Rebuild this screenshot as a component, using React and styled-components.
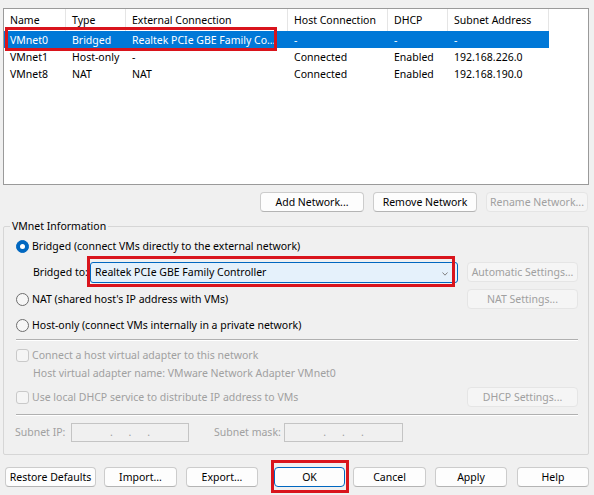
import React from "react";
import styled, { createGlobalStyle } from "styled-components";

const Global = createGlobalStyle`
  html, body { margin: 0; padding: 0; background: #f0f0f0; }
  * { box-sizing: border-box; }
`;

const FONT = `"Noto Sans", "Liberation Sans", sans-serif`;

const Window = styled.div`
  width: 594px;
  height: 495px;
  background: #f0f0f0;
  font-family: ${FONT};
  font-size: 10.5px;
  color: #000;
  display: flex;
  flex-direction: column;
  overflow: hidden;
`;

const ListBox = styled.div`
  position: relative;
  margin: 8px 5px 0 3px;
  height: 177px;
  border: 1px solid #9a9a9a;
  background: #fff;
`;

const cols = "62px 60px 162px 100px 60px 101px";

const HeaderRow = styled.div`
  display: grid;
  grid-template-columns: ${cols};
  height: 22px;
`;

const HeaderCell = styled.div`
  display: flex;
  align-items: center;
  padding-left: 6px;
  border-right: 1px solid #e5e5e5;
  white-space: nowrap;
`;

const Row = styled.div`
  display: grid;
  grid-template-columns: ${cols};
  height: 17px;
  width: 545px;
  background: ${(p) => (p.$selected ? "#0078d7" : "transparent")};
  color: ${(p) => (p.$selected ? "#fff" : "#000")};
`;

const Cell = styled.div`
  display: flex;
  align-items: center;
  padding-left: 6px;
  white-space: nowrap;
  overflow: hidden;
`;

const Highlight = styled.div`
  position: absolute;
  border: 3px solid #d9141c;
  pointer-events: none;
`;

const ButtonRow = styled.div`
  display: flex;
  justify-content: flex-end;
  gap: ${(p) => p.$gap || "9px"};
  margin: ${(p) => p.$margin || "0"};
`;

const Button = styled.div`
  position: relative;
  display: flex;
  align-items: center;
  justify-content: center;
  width: ${(p) => p.$w}px;
  height: 20px;
  margin-left: ${(p) => p.$ml || 0}px;
  border: 1px solid ${(p) => (p.$focus ? "#0067c0" : p.$disabled ? "#e5e5e5" : "#cccccc")};
  border-bottom-color: ${(p) => (p.$focus ? "#0067c0" : p.$disabled ? "#e5e5e5" : "#b4b4b4")};
  border-radius: 4px;
  background: ${(p) => (p.$disabled ? "#f5f5f5" : "#fdfdfd")};
  color: ${(p) => (p.$disabled ? "#a0a0a0" : "#000")};
  white-space: nowrap;
  flex-shrink: 0;
`;

const Group = styled.fieldset`
  margin: 6px 5px 0 3px;
  padding: 0 10px 12px 6px;
  border: 1px solid #d6d6d6;
  border-radius: 2px;
  min-width: 0;
`;

const Legend = styled.legend`
  padding: 0 2px;
  line-height: 16px;
  height: 16px;
`;

const Line = styled.div`
  display: flex;
  align-items: center;
  height: ${(p) => p.$h || 18}px;
  margin-top: ${(p) => p.$mt || 0}px;
  padding-left: ${(p) => p.$pl ?? 6}px;
  color: ${(p) => (p.$disabled ? "#a0a0a0" : "#000")};
  white-space: nowrap;
`;

const Spacer = styled.div`
  flex: 1;
`;

const RadioOuter = styled.span`
  width: 13px;
  height: 13px;
  border-radius: 50%;
  flex-shrink: 0;
  margin-right: 3px;
  display: flex;
  align-items: center;
  justify-content: center;
  background: ${(p) => (p.$on ? "#0067c0" : "#f6f6f6")};
  border: 1px solid ${(p) => (p.$on ? "#0067c0" : "#6e6e6e")};
  &::after {
    content: "";
    display: ${(p) => (p.$on ? "block" : "none")};
    width: 5px;
    height: 5px;
    border-radius: 50%;
    background: #fff;
  }
`;

const CheckBox = styled.span`
  width: 13px;
  height: 13px;
  border-radius: 3px;
  border: 1px solid #c9c9c9;
  background: #f5f5f5;
  flex-shrink: 0;
  margin-right: 3px;
`;

const Separator = styled.div`
  height: 2px;
  margin: ${(p) => p.$mt}px 0 0 6px;
  border-top: 1px solid #b0b0b0;
  border-bottom: 1px solid #fff;
`;

const FieldLabel = styled.span`
  width: ${(p) => p.$w}px;
  flex-shrink: 0;
  padding-left: ${(p) => p.$pl || 0}px;
`;

const Combo = styled.div`
  position: relative;
  flex: 1;
  height: 21px;
  margin-right: 9px;
  border: 1px solid #0067c0;
  border-radius: 3px;
  background: #e5f1fb;
  display: flex;
  align-items: center;
  padding-left: 4px;
`;

const Chevron = styled.svg`
  position: absolute;
  right: 9px;
  top: 9px;
`;

const IpBox = styled.div`
  width: ${(p) => p.$w}px;
  height: 19px;
  border: 1px solid #c4c4c4;
  background: #f0f0f0;
  display: flex;
  align-items: center;
  justify-content: space-evenly;
  padding: 0 22px;
  color: #a0a0a0;
  margin-right: ${(p) => p.$mr || 0}px;
`;

const rows = [
  ["VMnet0", "Bridged", "Realtek PCIe GBE Family Co...", "-", "-", "-"],
  ["VMnet1", "Host-only", "-", "Connected", "Enabled", "192.168.226.0"],
  ["VMnet8", "NAT", "NAT", "Connected", "Enabled", "192.168.190.0"],
];

const headers = ["Name", "Type", "External Connection", "Host Connection", "DHCP", "Subnet Address"];

export default function App() {
  return (
    <Window>
      <Global />
      <ListBox>
        <HeaderRow>
          {headers.map((h) => (
            <HeaderCell key={h}>{h}</HeaderCell>
          ))}
        </HeaderRow>
        {rows.map((r, i) => (
          <Row key={r[0]} $selected={i === 0}>
            {r.map((c, j) => (
              <Cell key={j}>{c}</Cell>
            ))}
          </Row>
        ))}
        <Highlight style={{ left: 1, top: 18, width: 272, height: 24 }} />
      </ListBox>

      <ButtonRow $margin="7px 6px 0 0">
        <Button $w={104}>Add Network...</Button>
        <Button $w={104}>Remove Network</Button>
        <Button $w={102} $disabled>Rename Network...</Button>
      </ButtonRow>

      <Group>
        <Legend>VMnet Information</Legend>
        <Line $mt={3}>
          <RadioOuter $on />
          Bridged (connect VMs directly to the external network)
        </Line>
        <Line $h={26} $mt={4}>
          <FieldLabel $w={74} $pl={17}>Bridged to:</FieldLabel>
          <Combo>
            Realtek PCIe GBE Family Controller
            <Chevron width="6" height="4" viewBox="0 0 6 4">
              <path d="M0.5 0.5 L3 3.2 L5.5 0.5" fill="none" stroke="#808080" strokeWidth="1" />
            </Chevron>
            <Highlight style={{ left: -4, top: -7, width: 368, height: 31 }} />
          </Combo>
          <Button $w={111} $disabled>Automatic Settings...</Button>
        </Line>
        <Line $h={20} $mt={4}>
          <RadioOuter />
          NAT (shared host's IP address with VMs)
          <Spacer />
          <Button $w={111} $disabled>NAT Settings...</Button>
        </Line>
        <Line $mt={7}>
          <RadioOuter />
          Host-only (connect VMs internally in a private network)
        </Line>
        <Separator $mt={5} />
        <Line $mt={5} $disabled>
          <CheckBox />
          Connect a host virtual adapter to this network
        </Line>
        <Line $disabled $pl={23}>
          Host virtual adapter name: VMware Network Adapter VMnet0
        </Line>
        <Line $h={20} $mt={5} $disabled>
          <CheckBox />
          Use local DHCP service to distribute IP address to VMs
          <Spacer />
          <Button $w={111} $disabled>DHCP Settings...</Button>
        </Line>
        <Separator $mt={7} />
        <Line $h={20} $mt={6} $disabled $pl={5}>
          <FieldLabel $w={56}>Subnet IP:</FieldLabel>
          <IpBox $w={118} $mr={25}>
            <span>.</span><span>.</span><span>.</span>
          </IpBox>
          <FieldLabel $w={70}>Subnet mask:</FieldLabel>
          <IpBox $w={119}>
            <span>.</span><span>.</span><span>.</span>
          </IpBox>
        </Line>
      </Group>

      <ButtonRow $margin="12px 5px 0 5px" $gap="0px">
        <Button $w={91}>Restore Defaults</Button>
        <Button $w={73} $ml={8}>Import...</Button>
        <Button $w={72} $ml={9}>Export...</Button>
        <Spacer />
        <Button $w={71} $focus>
          OK
          <Highlight style={{ left: -4, top: -8, width: 78, height: 33 }} />
        </Button>
        <Button $w={73} $ml={8}>Cancel</Button>
        <Button $w={72} $ml={9}>Apply</Button>
        <Button $w={72} $ml={10}>Help</Button>
      </ButtonRow>
    </Window>
  );
}
